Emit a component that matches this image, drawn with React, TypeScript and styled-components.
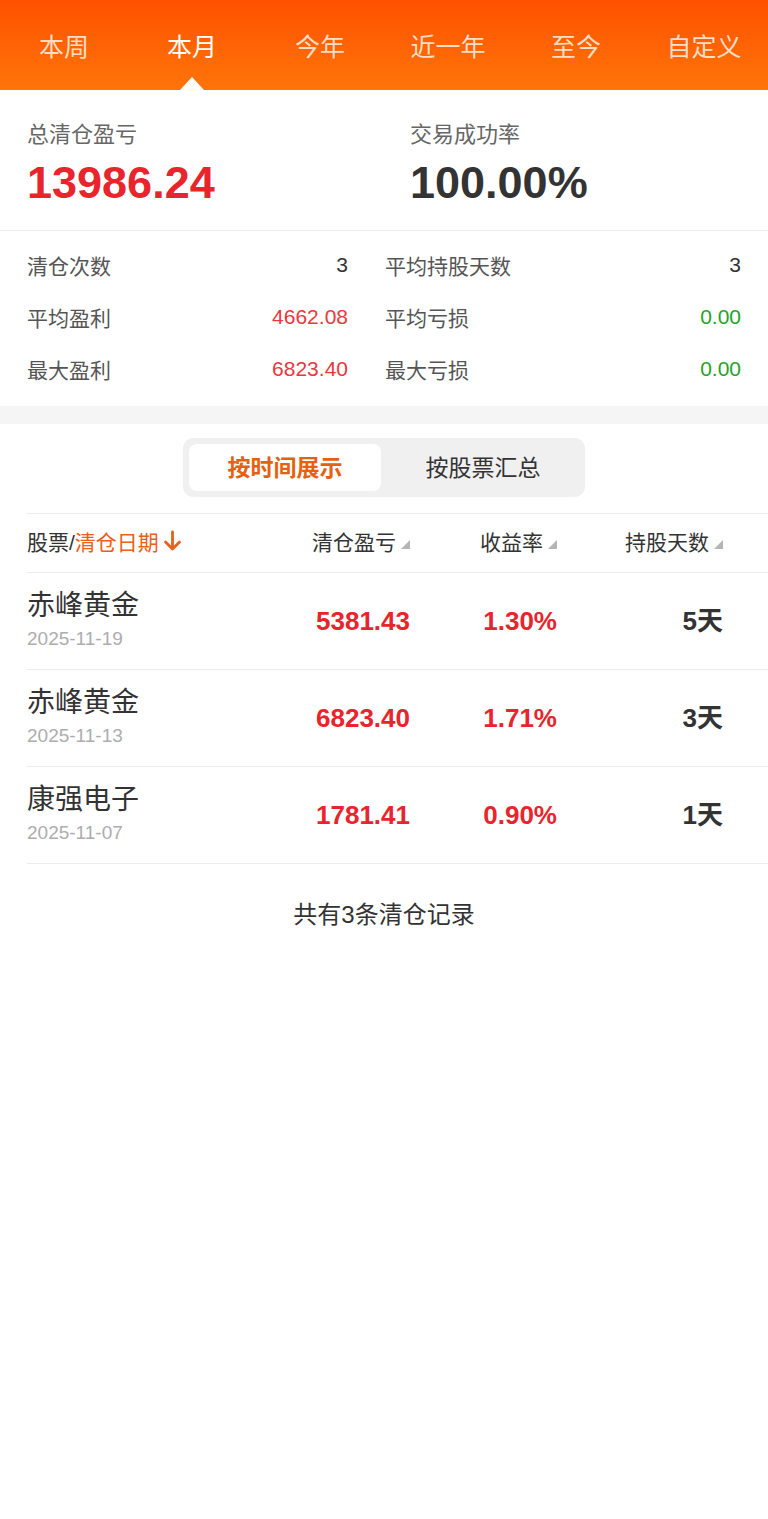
import React from 'react';
import styled, { createGlobalStyle } from 'styled-components';

const GlobalStyle = createGlobalStyle`
  html, body {
    margin: 0;
    padding: 0;
    background: #ffffff;
  }
  body {
    font-family: "Liberation Sans", "Noto Sans CJK SC", sans-serif;
    color: #333333;
  }
`;

const Page = styled.div`
  width: 768px;
  min-height: 1519px;
  background: #ffffff;
`;

const TabBar = styled.div`
  height: 90px;
  display: grid;
  grid-template-columns: repeat(6, 1fr);
  background: linear-gradient(to bottom, #ff5100 0%, #ff7509 100%);
`;

const Tab = styled.div<{ $active?: boolean }>`
  position: relative;
  display: flex;
  align-items: center;
  justify-content: center;
  font-size: 25px;
  color: ${(p) => (p.$active ? '#ffffff' : 'rgba(255, 240, 225, 0.88)')};

  &::after {
    content: '';
    display: ${(p) => (p.$active ? 'block' : 'none')};
    position: absolute;
    bottom: 0;
    left: 50%;
    margin-left: -12px;
    border-left: 12px solid transparent;
    border-right: 12px solid transparent;
    border-bottom: 13px solid #ffffff;
  }
`;

const Summary = styled.div`
  display: grid;
  grid-template-columns: 383px 1fr;
  padding: 30px 27px 22px;
  border-bottom: 1px solid #ececec;
`;

const SummaryItem = styled.div`
  display: flex;
  flex-direction: column;
`;

const SummaryLabel = styled.div`
  font-size: 22px;
  line-height: 30px;
  color: #666666;
`;

const SummaryValue = styled.div<{ $red?: boolean }>`
  margin-top: 8px;
  font-size: 45px;
  line-height: 50px;
  font-weight: 700;
  color: ${(p) => (p.$red ? '#e8242c' : '#333333')};
`;

const StatsGrid = styled.div`
  display: grid;
  grid-template-columns: 321px 356px;
  column-gap: 37px;
  padding: 9px 27px 10px;
`;

const StatRow = styled.div`
  display: flex;
  justify-content: space-between;
  align-items: center;
  height: 52px;
  padding-bottom: 2px;
  box-sizing: border-box;
  font-size: 21px;
  color: #555555;
`;

const StatValue = styled.span<{ $tone?: 'red' | 'green' }>`
  color: ${(p) => (p.$tone === 'red' ? '#e8383d' : p.$tone === 'green' ? '#26a326' : '#333333')};
`;

const Gap = styled.div`
  height: 18px;
  background: #f5f5f5;
`;

const SwitchWrap = styled.div`
  display: flex;
  justify-content: center;
  padding: 14px 0 16px;
`;

const Segmented = styled.div`
  display: flex;
  width: 390px;
  padding: 6px;
  gap: 6px;
  background: #f0f0f0;
  border-radius: 10px;
`;

const Segment = styled.div<{ $active?: boolean }>`
  flex: 1;
  height: 47px;
  padding-bottom: 4px;
  box-sizing: border-box;
  display: flex;
  align-items: center;
  justify-content: center;
  border-radius: 8px;
  font-size: 23px;
  font-weight: ${(p) => (p.$active ? 700 : 400)};
  color: ${(p) => (p.$active ? '#e8600f' : '#333333')};
  background: ${(p) => (p.$active ? '#ffffff' : 'transparent')};
`;

const Table = styled.div`
  margin-left: 27px;
`;

const rowColumns = `
  display: grid;
  grid-template-columns: 220px 163px 147px 166px 45px;
  align-items: center;
`;

const HeadRow = styled.div`
  ${rowColumns}
  height: 60px;
  padding-bottom: 4px;
  box-sizing: border-box;
  border-top: 1px solid #ececec;
  border-bottom: 1px solid #ececec;
  font-size: 21px;
  color: #333333;
`;

const HeadCell = styled.div`
  display: flex;
  align-items: center;
  justify-content: flex-end;
  gap: 5px;
`;

const HeadFirst = styled.div`
  display: flex;
  align-items: center;
`;

const Orange = styled.span`
  color: #e8601a;
`;

const SortMark = styled.span`
  width: 0;
  height: 0;
  margin-top: 7px;
  border-left: 9px solid transparent;
  border-bottom: 9px solid #b5b5b5;
`;

const Row = styled.div`
  ${rowColumns}
  height: 97px;
  box-sizing: border-box;
  border-bottom: 1px solid #ececec;
`;

const NameCell = styled.div`
  display: flex;
  flex-direction: column;
  gap: 5px;
  margin-top: -4px;
`;

const StockName = styled.div`
  font-size: 28px;
  line-height: 34px;
  color: #333333;
`;

const StockDate = styled.div`
  font-size: 19px;
  line-height: 22px;
  color: #adadad;
`;

const NumCell = styled.div<{ $red?: boolean }>`
  text-align: right;
  font-size: 26px;
  line-height: 1;
  font-weight: 700;
  color: ${(p) => (p.$red ? '#e8242c' : '#333333')};
`;

const Footer = styled.div`
  padding: 37px 0;
  text-align: center;
  font-size: 24px;
  line-height: 28px;
  color: #333333;
`;

const tabs = ['本周', '本月', '今年', '近一年', '至今', '自定义'];

const records = [
  { name: '赤峰黄金', date: '2025-11-19', profit: '5381.43', rate: '1.30%', days: '5天' },
  { name: '赤峰黄金', date: '2025-11-13', profit: '6823.40', rate: '1.71%', days: '3天' },
  { name: '康强电子', date: '2025-11-07', profit: '1781.41', rate: '0.90%', days: '1天' },
];

const App: React.FC = () => {
  return (
    <Page>
      <GlobalStyle />
      <TabBar>
        {tabs.map((t) => (
          <Tab key={t} $active={t === '本月'}>
            {t}
          </Tab>
        ))}
      </TabBar>

      <Summary>
        <SummaryItem>
          <SummaryLabel>总清仓盈亏</SummaryLabel>
          <SummaryValue $red>13986.24</SummaryValue>
        </SummaryItem>
        <SummaryItem>
          <SummaryLabel>交易成功率</SummaryLabel>
          <SummaryValue>100.00%</SummaryValue>
        </SummaryItem>
      </Summary>

      <StatsGrid>
        <StatRow>
          清仓次数<StatValue>3</StatValue>
        </StatRow>
        <StatRow>
          平均持股天数<StatValue>3</StatValue>
        </StatRow>
        <StatRow>
          平均盈利<StatValue $tone="red">4662.08</StatValue>
        </StatRow>
        <StatRow>
          平均亏损<StatValue $tone="green">0.00</StatValue>
        </StatRow>
        <StatRow>
          最大盈利<StatValue $tone="red">6823.40</StatValue>
        </StatRow>
        <StatRow>
          最大亏损<StatValue $tone="green">0.00</StatValue>
        </StatRow>
      </StatsGrid>

      <Gap />

      <SwitchWrap>
        <Segmented>
          <Segment $active>按时间展示</Segment>
          <Segment>按股票汇总</Segment>
        </Segmented>
      </SwitchWrap>

      <Table>
        <HeadRow>
          <HeadFirst>
            股票/<Orange>清仓日期</Orange>
            <svg width="19" height="22" viewBox="0 0 19 22" style={{ marginLeft: 4 }}>
              <path d="M9.5 2 V19 M2.5 12 L9.5 19 L16.5 12" fill="none" stroke="#e8601a" strokeWidth="2.8" strokeLinecap="round" strokeLinejoin="round" />
            </svg>
          </HeadFirst>
          <HeadCell>
            清仓盈亏<SortMark />
          </HeadCell>
          <HeadCell>
            收益率<SortMark />
          </HeadCell>
          <HeadCell>
            持股天数<SortMark />
          </HeadCell>
          <div />
        </HeadRow>

        {records.map((r) => (
          <Row key={r.date}>
            <NameCell>
              <StockName>{r.name}</StockName>
              <StockDate>{r.date}</StockDate>
            </NameCell>
            <NumCell $red>{r.profit}</NumCell>
            <NumCell $red>{r.rate}</NumCell>
            <NumCell>{r.days}</NumCell>
            <div />
          </Row>
        ))}
      </Table>

      <Footer>共有3条清仓记录</Footer>
    </Page>
  );
};

export default App;
